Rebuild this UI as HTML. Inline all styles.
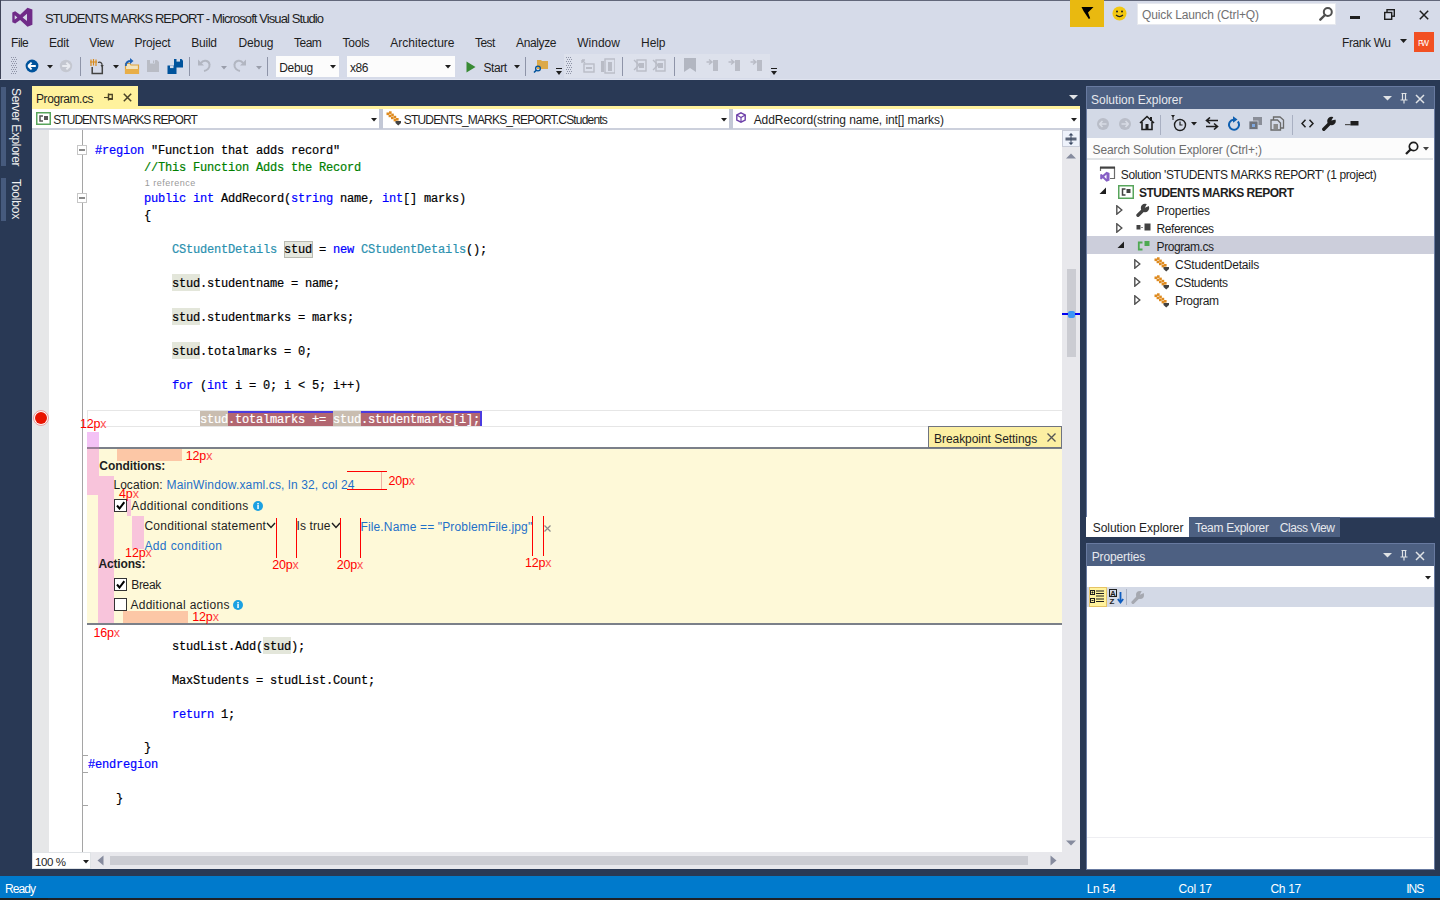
<!DOCTYPE html>
<html><head><meta charset="utf-8">
<style>
*{margin:0;padding:0;box-sizing:border-box}
html,body{width:1440px;height:900px;overflow:hidden;background:#293955;font-family:"Liberation Sans",sans-serif;font-size:12px;color:#1E1E1E}
.a{position:absolute;display:block}
.t{position:absolute;white-space:pre;line-height:1}
.c{position:absolute;white-space:pre;line-height:1;font-family:"Liberation Mono",monospace;font-size:12px;letter-spacing:-0.2px;color:#000;-webkit-text-stroke:0.2px currentColor}
.k{color:#0000FF}.ty{color:#2B91AF}.cm{color:#008000}
</style></head><body>
<div class="a" style="left:0px;top:0px;width:1440px;height:80px;background:#D6DBE9;"></div>
<div class="a" style="left:0px;top:0px;width:1440px;height:1px;background:#62677A;"></div>
<div class="a" style="left:0px;top:0px;width:1px;height:900px;background:#3F4458;"></div>
<svg class="a" style="left:12px;top:7px;" width="22" height="21" viewBox="0 0 22 21"><path d="M15.5 0.8 L20.4 2.6 V17.8 L15.5 19.8 L8.1 13 L3.2 16.6 L0.3 15.3 V5.5 L3.2 4.2 L8.1 7.8 Z M15 6.8 V14 L10.6 10.4 Z M2.7 8.3 V12.5 L5.4 10.4 Z" fill="#702B88" fill-rule="evenodd"/></svg>
<div class="t" style="left:45px;top:11.95px;font-size:13px;color:#1E1E1E;font-family:'Liberation Sans',sans-serif;letter-spacing:-0.908px;">STUDENTS MARKS REPORT - Microsoft Visual Studio</div>
<div class="a" style="left:1070px;top:0px;width:34px;height:27px;background:#E9B910;"></div>
<svg class="a" style="left:1080px;top:6px;" width="16" height="15" viewBox="0 0 16 15"><path d="M1.5 1 H13.5 L8 6.5 L10.2 12.3 L8.8 13 L3.5 5 Z" fill="#000"/></svg>
<svg class="a" style="left:1112px;top:6px;" width="15" height="15" viewBox="0 0 15 15"><circle cx="7.5" cy="7.5" r="7" fill="#F2C811"/><circle cx="5" cy="5.6" r="1" fill="#1E1E1E"/><circle cx="10" cy="5.6" r="1" fill="#1E1E1E"/><path d="M4 9 Q7.5 12.2 11 9" stroke="#1E1E1E" stroke-width="1.1" fill="none"/></svg>
<div class="a" style="left:1137px;top:3px;width:199px;height:22px;background:#FFFFFF;border:1px solid #E6E8EE"></div>
<div class="t" style="left:1142px;top:9.3px;font-size:12px;color:#717171;font-family:'Liberation Sans',sans-serif;letter-spacing:-0.135px;">Quick Launch (Ctrl+Q)</div>
<svg class="a" style="left:1318px;top:6px;" width="16" height="16" viewBox="0 0 16 16"><circle cx="9.8" cy="6" r="4" stroke="#505050" stroke-width="2" fill="none"/><path d="M7 9 L2.3 13.7" stroke="#505050" stroke-width="2.4" stroke-linecap="round"/></svg>
<div class="a" style="left:1350px;top:16px;width:10px;height:3px;background:#1E1E1E;"></div>
<svg class="a" style="left:1384px;top:9px;" width="11" height="11" viewBox="0 0 11 11"><rect x="3" y="0.7" width="7.3" height="6.5" stroke="#1E1E1E" stroke-width="1.4" fill="none"/><rect x="0.7" y="3.5" width="7" height="6.8" stroke="#1E1E1E" stroke-width="1.4" fill="#D6DBE9"/></svg>
<svg class="a" style="left:1419px;top:10px;" width="10" height="10" viewBox="0 0 10 10"><path d="M0.8 0.8 L9.2 9.2 M9.2 0.8 L0.8 9.2" stroke="#1E1E1E" stroke-width="1.5"/></svg>
<div class="t" style="left:1342px;top:37.3px;font-size:12px;color:#1E1E1E;font-family:'Liberation Sans',sans-serif;letter-spacing:-0.397px;">Frank Wu</div>
<svg class="a" style="left:1400px;top:39px;" width="7" height="5" viewBox="0 0 7 5"><path d="M0 0 H7 L3.5 4 Z" fill="#1E1E1E"/></svg>
<div class="a" style="left:1414px;top:32px;width:20px;height:20px;background:#F25022;"></div>
<div class="t" style="left:1418px;top:39.27px;font-size:8.5px;color:#FFFFFF;font-family:'Liberation Sans',sans-serif;letter-spacing:-2.203px;">FW</div>
<div class="t" style="left:11.1px;top:36.6px;font-size:12px;color:#1E1E1E;font-family:'Liberation Sans',sans-serif;letter-spacing:-0.548px;">File</div>
<div class="t" style="left:49.1px;top:36.6px;font-size:12px;color:#1E1E1E;font-family:'Liberation Sans',sans-serif;letter-spacing:-0.257px;">Edit</div>
<div class="t" style="left:89.3px;top:36.6px;font-size:12px;color:#1E1E1E;font-family:'Liberation Sans',sans-serif;letter-spacing:-0.366px;">View</div>
<div class="t" style="left:134.6px;top:36.6px;font-size:12px;color:#1E1E1E;font-family:'Liberation Sans',sans-serif;letter-spacing:-0.241px;">Project</div>
<div class="t" style="left:191.3px;top:36.6px;font-size:12px;color:#1E1E1E;font-family:'Liberation Sans',sans-serif;letter-spacing:-0.247px;">Build</div>
<div class="t" style="left:238.5px;top:36.6px;font-size:12px;color:#1E1E1E;font-family:'Liberation Sans',sans-serif;letter-spacing:-0.115px;">Debug</div>
<div class="t" style="left:294px;top:36.6px;font-size:12px;color:#1E1E1E;font-family:'Liberation Sans',sans-serif;letter-spacing:-0.515px;">Team</div>
<div class="t" style="left:342.6px;top:36.6px;font-size:12px;color:#1E1E1E;font-family:'Liberation Sans',sans-serif;letter-spacing:-0.254px;">Tools</div>
<div class="t" style="left:390.3px;top:36.6px;font-size:12px;color:#1E1E1E;font-family:'Liberation Sans',sans-serif;letter-spacing:0.017px;">Architecture</div>
<div class="t" style="left:475.1px;top:36.6px;font-size:12px;color:#1E1E1E;font-family:'Liberation Sans',sans-serif;letter-spacing:-0.6px;">Test</div>
<div class="t" style="left:516px;top:36.6px;font-size:12px;color:#1E1E1E;font-family:'Liberation Sans',sans-serif;letter-spacing:-0.365px;">Analyze</div>
<div class="t" style="left:577.2px;top:36.6px;font-size:12px;color:#1E1E1E;font-family:'Liberation Sans',sans-serif;letter-spacing:0.022px;">Window</div>
<div class="t" style="left:641.1px;top:36.6px;font-size:12px;color:#1E1E1E;font-family:'Liberation Sans',sans-serif;letter-spacing:-0.129px;">Help</div>
<svg class="a" style="left:11px;top:57px;" width="7" height="18" viewBox="0 0 7 18"><rect x="0" y="0" width="1" height="1" fill="#8E93A6"/><rect x="2" y="0" width="1" height="1" fill="#8E93A6"/><rect x="4" y="0" width="1" height="1" fill="#8E93A6"/><rect x="1" y="2" width="1" height="1" fill="#8E93A6"/><rect x="3" y="2" width="1" height="1" fill="#8E93A6"/><rect x="5" y="2" width="1" height="1" fill="#8E93A6"/><rect x="0" y="4" width="1" height="1" fill="#8E93A6"/><rect x="2" y="4" width="1" height="1" fill="#8E93A6"/><rect x="4" y="4" width="1" height="1" fill="#8E93A6"/><rect x="1" y="6" width="1" height="1" fill="#8E93A6"/><rect x="3" y="6" width="1" height="1" fill="#8E93A6"/><rect x="5" y="6" width="1" height="1" fill="#8E93A6"/><rect x="0" y="8" width="1" height="1" fill="#8E93A6"/><rect x="2" y="8" width="1" height="1" fill="#8E93A6"/><rect x="4" y="8" width="1" height="1" fill="#8E93A6"/><rect x="1" y="10" width="1" height="1" fill="#8E93A6"/><rect x="3" y="10" width="1" height="1" fill="#8E93A6"/><rect x="5" y="10" width="1" height="1" fill="#8E93A6"/><rect x="0" y="12" width="1" height="1" fill="#8E93A6"/><rect x="2" y="12" width="1" height="1" fill="#8E93A6"/><rect x="4" y="12" width="1" height="1" fill="#8E93A6"/><rect x="1" y="14" width="1" height="1" fill="#8E93A6"/><rect x="3" y="14" width="1" height="1" fill="#8E93A6"/><rect x="5" y="14" width="1" height="1" fill="#8E93A6"/><rect x="0" y="16" width="1" height="1" fill="#8E93A6"/><rect x="2" y="16" width="1" height="1" fill="#8E93A6"/><rect x="4" y="16" width="1" height="1" fill="#8E93A6"/></svg>
<svg class="a" style="left:25px;top:59px;" width="14" height="14" viewBox="0 0 14 14"><circle cx="7" cy="7" r="6.4" fill="#00539C"/><path d="M3.2 7 L6.6 3.6 M3.2 7 L6.6 10.4 M3.4 7 H10.8" stroke="#FFFFFF" stroke-width="1.9" fill="none"/></svg>
<svg class="a" style="left:47px;top:65px;" width="6" height="4" viewBox="0 0 6 4"><path d="M0 0 H6 L3 3.5 Z" fill="#1E1E1E"/></svg>
<svg class="a" style="left:59px;top:59px;" width="14" height="14" viewBox="0 0 14 14"><circle cx="7" cy="7" r="6.2" fill="#C4C7D0"/><path d="M10.8 7 L7.4 3.6 M10.8 7 L7.4 10.4 M10.6 7 H3.2" stroke="#E9EBF0" stroke-width="1.9" fill="none"/></svg>
<div class="a" style="left:80px;top:57px;width:1px;height:19px;background:#8E94A8;"></div>
<svg class="a" style="left:89px;top:58px;" width="16" height="17" viewBox="0 0 16 17"><path d="M2 1.5 V8 M4.5 1 V7.5 M7 1.5 V8 M1 4 H8" stroke="#D98A1A" stroke-width="1.2"/><path d="M3.2 9 V15.5 H13.3 V7.5" fill="none" stroke="#424242" stroke-width="1.5"/><path d="M9 4.5 C11.5 3.5 13.5 5 13 7.5" stroke="#424242" stroke-width="1.3" fill="none"/><path d="M11.5 7 L13 9.5 L14.8 7 Z" fill="#424242"/></svg>
<svg class="a" style="left:113px;top:65px;" width="6" height="4" viewBox="0 0 6 4"><path d="M0 0 H6 L3 3.5 Z" fill="#1E1E1E"/></svg>
<svg class="a" style="left:123px;top:58px;" width="17" height="17" viewBox="0 0 17 17"><path d="M2.5 5.5 H7 L8 7 H15.5 V15.5 H2.5 Z" fill="#F1E3BF" stroke="#E0A43C" stroke-width="1.2"/><rect x="2" y="11" width="14" height="5" fill="#E8AE48"/><path d="M2.8 8 C2.8 4.5 5 3 8 3" stroke="#1E62B5" stroke-width="1.8" fill="none"/><path d="M7 0 L10.5 3 L7 6 Z" fill="#1E62B5"/></svg>
<svg class="a" style="left:146px;top:59px;" width="14" height="14" viewBox="0 0 14 14"><path d="M1 1 H11 L13 3 V13 H1 Z" fill="#B9BCC5"/><rect x="4" y="1" width="5" height="3.5" fill="#D6DBE9"/><rect x="7" y="1.5" width="1.2" height="2.5" fill="#B9BCC5"/></svg>
<svg class="a" style="left:166px;top:57px;" width="18" height="18" viewBox="0 0 18 18"><path d="M8 2 H15.5 L17 3.5 V10.5 H8 Z" fill="#00539C"/><rect x="10.5" y="2" width="3.5" height="2.6" fill="#D6DBE9"/><path d="M1.5 8.5 H9 L10.5 10 V17 H1.5 Z" fill="#00539C"/><rect x="4" y="8.5" width="3.5" height="2.6" fill="#D6DBE9"/></svg>
<div class="a" style="left:189px;top:57px;width:1px;height:19px;background:#8E94A8;"></div>
<svg class="a" style="left:197px;top:58px;" width="15" height="15" viewBox="0 0 15 15"><path d="M4 5 C6 1.5 12 2 12.5 6.5 C13 10 10 12.5 7 13" stroke="#B2B6C1" stroke-width="2" fill="none"/><path d="M1 1.5 V7.5 H7 Z" fill="#B2B6C1"/></svg>
<svg class="a" style="left:221px;top:66px;" width="6" height="4" viewBox="0 0 6 4"><path d="M0 0 H6 L3 3.5 Z" fill="#9A9EAB"/></svg>
<svg class="a" style="left:232px;top:58px;" width="15" height="15" viewBox="0 0 15 15"><path d="M11 5 C9 1.5 3 2 2.5 6.5 C2 10 5 12.5 8 13" stroke="#B2B6C1" stroke-width="2" fill="none"/><path d="M14 1.5 V7.5 H8 Z" fill="#B2B6C1"/></svg>
<svg class="a" style="left:256px;top:66px;" width="6" height="4" viewBox="0 0 6 4"><path d="M0 0 H6 L3 3.5 Z" fill="#9A9EAB"/></svg>
<div class="a" style="left:267px;top:57px;width:1px;height:19px;background:#8E94A8;"></div>
<div class="a" style="left:276px;top:56px;width:63px;height:21px;background:#FCFCFC;"></div>
<div class="t" style="left:279.3px;top:62.3px;font-size:12px;color:#1E1E1E;font-family:'Liberation Sans',sans-serif;letter-spacing:-0.34px;">Debug</div>
<svg class="a" style="left:330px;top:65px;" width="6" height="4" viewBox="0 0 6 4"><path d="M0 0 H6 L3 3.5 Z" fill="#1E1E1E"/></svg>
<div class="a" style="left:347px;top:56px;width:108px;height:21px;background:#FCFCFC;"></div>
<div class="t" style="left:350px;top:62.3px;font-size:12px;color:#1E1E1E;font-family:'Liberation Sans',sans-serif;letter-spacing:-0.422px;">x86</div>
<svg class="a" style="left:445px;top:65px;" width="6" height="4" viewBox="0 0 6 4"><path d="M0 0 H6 L3 3.5 Z" fill="#1E1E1E"/></svg>
<svg class="a" style="left:466px;top:61px;" width="10" height="12" viewBox="0 0 10 12"><path d="M0.5 0.5 L9.5 6 L0.5 11.5 Z" fill="#388A34"/></svg>
<div class="t" style="left:483.6px;top:62.3px;font-size:12px;color:#1E1E1E;font-family:'Liberation Sans',sans-serif;letter-spacing:-0.482px;">Start</div>
<svg class="a" style="left:514px;top:65px;" width="6" height="4" viewBox="0 0 6 4"><path d="M0 0 H6 L3 3.5 Z" fill="#1E1E1E"/></svg>
<div class="a" style="left:525px;top:57px;width:1px;height:19px;background:#8E94A8;"></div>
<svg class="a" style="left:533px;top:57px;" width="17" height="17" viewBox="0 0 17 17"><path d="M4 3 H8 L9 4 H15 V12 H4 Z" fill="#DCA948"/><circle cx="5" cy="11.5" r="2.4" stroke="#00539C" stroke-width="1.3" fill="none"/><path d="M3.3 13.2 L1 15.5" stroke="#00539C" stroke-width="1.6"/></svg>
<svg class="a" style="left:555px;top:68px;" width="8" height="8" viewBox="0 0 8 8"><rect x="1" y="0" width="6" height="1" fill="#1E1E1E"/><path d="M1 3 H7 L4 7 Z" fill="#1E1E1E"/></svg>
<div class="a" style="left:564px;top:54px;width:206px;height:24px;background:#DDE1EC;"></div>
<svg class="a" style="left:566px;top:57px;" width="7" height="18" viewBox="0 0 7 18"><rect x="0" y="0" width="1" height="1" fill="#8E93A6"/><rect x="2" y="0" width="1" height="1" fill="#8E93A6"/><rect x="4" y="0" width="1" height="1" fill="#8E93A6"/><rect x="1" y="2" width="1" height="1" fill="#8E93A6"/><rect x="3" y="2" width="1" height="1" fill="#8E93A6"/><rect x="5" y="2" width="1" height="1" fill="#8E93A6"/><rect x="0" y="4" width="1" height="1" fill="#8E93A6"/><rect x="2" y="4" width="1" height="1" fill="#8E93A6"/><rect x="4" y="4" width="1" height="1" fill="#8E93A6"/><rect x="1" y="6" width="1" height="1" fill="#8E93A6"/><rect x="3" y="6" width="1" height="1" fill="#8E93A6"/><rect x="5" y="6" width="1" height="1" fill="#8E93A6"/><rect x="0" y="8" width="1" height="1" fill="#8E93A6"/><rect x="2" y="8" width="1" height="1" fill="#8E93A6"/><rect x="4" y="8" width="1" height="1" fill="#8E93A6"/><rect x="1" y="10" width="1" height="1" fill="#8E93A6"/><rect x="3" y="10" width="1" height="1" fill="#8E93A6"/><rect x="5" y="10" width="1" height="1" fill="#8E93A6"/><rect x="0" y="12" width="1" height="1" fill="#8E93A6"/><rect x="2" y="12" width="1" height="1" fill="#8E93A6"/><rect x="4" y="12" width="1" height="1" fill="#8E93A6"/><rect x="1" y="14" width="1" height="1" fill="#8E93A6"/><rect x="3" y="14" width="1" height="1" fill="#8E93A6"/><rect x="5" y="14" width="1" height="1" fill="#8E93A6"/><rect x="0" y="16" width="1" height="1" fill="#8E93A6"/><rect x="2" y="16" width="1" height="1" fill="#8E93A6"/><rect x="4" y="16" width="1" height="1" fill="#8E93A6"/></svg>
<svg class="a" style="left:580px;top:58px;" width="15" height="16" viewBox="0 0 15 16"><path d="M2 2 L5 5 M2 2 V5 M2 2 H5" stroke="#B9BCC6" stroke-width="1.4"/><rect x="4" y="6" width="10" height="8" fill="none" stroke="#B9BCC6" stroke-width="1.4"/><rect x="6" y="9" width="6" height="2" fill="#B9BCC6"/></svg>
<svg class="a" style="left:600px;top:58px;" width="15" height="16" viewBox="0 0 15 16"><rect x="1" y="3" width="3" height="11" fill="#B9BCC6"/><rect x="5" y="1" width="10" height="14" fill="none" stroke="#B9BCC6" stroke-width="1.4"/><rect x="8" y="4" width="4" height="9" fill="#B9BCC6"/></svg>
<div class="a" style="left:622px;top:57px;width:1px;height:19px;background:#8E94A8;"></div>
<svg class="a" style="left:633px;top:58px;" width="14" height="15" viewBox="0 0 14 15"><rect x="4" y="2" width="9" height="11" fill="none" stroke="#B9BCC6" stroke-width="1.4"/><path d="M1 2 L6 7 L1 12" stroke="#B9BCC6" stroke-width="1.4" fill="none"/><rect x="6" y="5" width="5" height="5" fill="#B9BCC6"/></svg>
<svg class="a" style="left:652px;top:58px;" width="14" height="15" viewBox="0 0 14 15"><rect x="4" y="2" width="9" height="11" fill="none" stroke="#B9BCC6" stroke-width="1.4"/><path d="M1 2 L6 7 L1 12" stroke="#B9BCC6" stroke-width="1.4" fill="none"/><rect x="6" y="5" width="5" height="5" fill="#B9BCC6"/></svg>
<div class="a" style="left:674px;top:57px;width:1px;height:19px;background:#8E94A8;"></div>
<svg class="a" style="left:684px;top:58px;" width="12" height="15" viewBox="0 0 12 15"><path d="M0 0 H12 V14 L6 10 L0 14 Z" fill="#B2B6C1"/></svg>
<svg class="a" style="left:706px;top:58px;" width="14" height="15" viewBox="0 0 14 15"><rect x="7" y="2" width="5" height="11" fill="#B9BCC6"/><path d="M0.5 4 H6 M3 1.5 L6 4 L3 6.5" stroke="#B9BCC6" stroke-width="1.4" fill="none"/></svg>
<svg class="a" style="left:728px;top:58px;" width="14" height="15" viewBox="0 0 14 15"><rect x="7" y="2" width="5" height="11" fill="#B9BCC6"/><path d="M0.5 4 H6 M3 1.5 L6 4 L3 6.5" stroke="#B9BCC6" stroke-width="1.4" fill="none"/></svg>
<svg class="a" style="left:750px;top:58px;" width="14" height="15" viewBox="0 0 14 15"><rect x="7" y="2" width="5" height="11" fill="#B9BCC6"/><path d="M0.5 4 H6 M3 1.5 L6 4 L3 6.5" stroke="#B9BCC6" stroke-width="1.4" fill="none"/></svg>
<svg class="a" style="left:770px;top:68px;" width="8" height="8" viewBox="0 0 8 8"><rect x="1" y="0" width="6" height="1" fill="#1E1E1E"/><path d="M1 3 H7 L4 7 Z" fill="#1E1E1E"/></svg>
<div class="a" style="left:0px;top:80px;width:1440px;height:796px;background:#293955;"></div>
<div class="a" style="left:0px;top:79px;width:1440px;height:1px;background:#DFE3EF;"></div>
<div class="a" style="left:1px;top:87px;width:5px;height:79px;background:#465A7D;"></div>
<div class="a" style="left:1px;top:178px;width:5px;height:43px;background:#465A7D;"></div>
<div class="t" style="left:9px;top:88px;width:13px;height:78px;writing-mode:vertical-rl;font-size:12px;color:#F0F0F0;letter-spacing:-0.35px;line-height:13px">Server Explorer</div>
<div class="t" style="left:9px;top:179px;width:13px;height:41px;writing-mode:vertical-rl;font-size:12px;color:#F0F0F0;letter-spacing:-0.2px;line-height:13px">Toolbox</div>
<div class="a" style="left:32px;top:86px;width:106px;height:21px;background:#FFF29D;"></div>
<div class="t" style="left:36px;top:93.3px;font-size:12px;color:#1E1E1E;font-family:'Liberation Sans',sans-serif;letter-spacing:-0.427px;">Program.cs</div>
<svg class="a" style="left:104px;top:92px;" width="11" height="10" viewBox="0 0 11 10"><path d="M0 5.5 H4.5" stroke="#4A4326" stroke-width="1.1"/><path d="M4.5 2.5 H8.3 V7 H4.5 Z" stroke="#4A4326" stroke-width="1.3" fill="none"/><rect x="4" y="6" width="4.8" height="1.8" fill="#4A4326"/><path d="M4.5 1.5 V8.5" stroke="#4A4326" stroke-width="1.2"/></svg>
<svg class="a" style="left:123px;top:93px;" width="9" height="9" viewBox="0 0 9 9"><path d="M0.8 0.8 L8.2 8.2 M8.2 0.8 L0.8 8.2" stroke="#4A4326" stroke-width="1.5"/></svg>
<svg class="a" style="left:1069px;top:95px;" width="9" height="5" viewBox="0 0 9 5"><path d="M0 0 H9 L4.5 4.5 Z" fill="#E0E3E6"/></svg>
<div class="a" style="left:32px;top:106px;width:1048px;height:3px;background:#FFF29D;"></div>
<div class="a" style="left:32px;top:109px;width:1048px;height:21px;background:#FFFFFF;"></div>
<div class="a" style="left:32px;top:128px;width:1048px;height:2px;background:#CCD0DC;"></div>
<svg class="a" style="left:36px;top:112px;" width="15" height="13" viewBox="0 0 15 13"><rect x="0.75" y="0.75" width="13.5" height="11.5" fill="none" stroke="#58A55C" stroke-width="1.5"/><path d="M7 4 H4 V9 H7" stroke="#555" stroke-width="1.5" fill="none"/><rect x="8" y="4" width="4" height="4" fill="#555"/></svg>
<div class="t" style="left:53.3px;top:114.1px;font-size:12px;color:#1E1E1E;font-family:'Liberation Sans',sans-serif;letter-spacing:-0.969px;">STUDENTS MARKS REPORT</div>
<svg class="a" style="left:371px;top:118px;" width="6" height="4" viewBox="0 0 6 4"><path d="M0 0 H6 L3 3.5 Z" fill="#1E1E1E"/></svg>
<div class="a" style="left:379px;top:109px;width:4px;height:20px;background:#C3C8D6;"></div>
<svg class="a" style="left:386px;top:111px;" width="16" height="15" viewBox="0 0 16 15"><rect x="0.5" y="1.5" width="2.6" height="2.6" fill="#DE8A1F"/><rect x="3" y="0.3" width="2.6" height="2.6" fill="#DE8A1F"/><rect x="2.6" y="3.6" width="2.6" height="2.6" fill="#DE8A1F"/><rect x="5.2" y="2.6" width="2.6" height="2.6" fill="#DE8A1F"/><rect x="5" y="5.6" width="2.6" height="2.6" fill="#DE8A1F"/><rect x="7.6" y="4.8" width="2.6" height="2.6" fill="#DE8A1F"/><rect x="7.6" y="7.8" width="2.6" height="2.6" fill="#DE8A1F"/><rect x="10" y="7" width="2.6" height="2.6" fill="#DE8A1F"/><path d="M9.5 10 H15 V12 L12.25 14.5 L9.5 12 Z" fill="#424242"/></svg>
<div class="t" style="left:403.75px;top:114.1px;font-size:12px;color:#1E1E1E;font-family:'Liberation Sans',sans-serif;letter-spacing:-0.816px;">STUDENTS_MARKS_REPORT.CStudents</div>
<svg class="a" style="left:721px;top:118px;" width="6" height="4" viewBox="0 0 6 4"><path d="M0 0 H6 L3 3.5 Z" fill="#1E1E1E"/></svg>
<div class="a" style="left:729px;top:109px;width:4px;height:20px;background:#C3C8D6;"></div>
<svg class="a" style="left:736px;top:112px;" width="10" height="11" viewBox="0 0 10 11"><path d="M5 0.8 L9.2 3 V8 L5 10.2 L0.8 8 V3 Z" fill="none" stroke="#6C3EA8" stroke-width="1.4"/><path d="M0.8 3 L5 5.5 L9.2 3 M5 5.5 V10" stroke="#6C3EA8" stroke-width="1.2" fill="none"/></svg>
<div class="t" style="left:753.7px;top:114.1px;font-size:12px;color:#1E1E1E;font-family:'Liberation Sans',sans-serif;letter-spacing:-0.074px;">AddRecord(string name, int[] marks)</div>
<svg class="a" style="left:1071px;top:118px;" width="6" height="4" viewBox="0 0 6 4"><path d="M0 0 H6 L3 3.5 Z" fill="#1E1E1E"/></svg>
<div class="a" style="left:32px;top:130px;width:1030px;height:722px;background:#FFFFFF;"></div>
<div class="a" style="left:32px;top:130px;width:17px;height:722px;background:#E6E7E8;"></div>
<div class="a" style="left:82px;top:130px;width:1px;height:722px;background:#A5A5A5;"></div>
<div class="a" style="left:1062px;top:130px;width:18px;height:722px;background:#E8E8EC;"></div>
<div class="a" style="left:1062px;top:130px;width:18px;height:17px;background:#EEF2FB;border:1px solid #C8CCD8"></div>
<svg class="a" style="left:1064px;top:132px;" width="14" height="14" viewBox="0 0 14 14"><path d="M7 1 L9.5 3.5 H4.5 Z M7 13 L9.5 10.5 H4.5 Z" fill="#3C4A64"/><rect x="1.5" y="5.5" width="11" height="3" fill="#5A6478"/><path d="M7 3 V11" stroke="#3C4A64"/></svg>
<svg class="a" style="left:1066px;top:153px;" width="10" height="6" viewBox="0 0 10 6"><path d="M0 5.5 L5 0.5 L10 5.5 Z" fill="#868B9E"/></svg>
<div class="a" style="left:1067px;top:269px;width:9px;height:88px;background:#CBCCD2;"></div>
<div class="a" style="left:1062px;top:313px;width:18px;height:2px;background:#0000F0;"></div>
<svg class="a" style="left:1068px;top:311px;" width="7" height="7" viewBox="0 0 7 7"><rect x="0" y="0" width="7" height="7" rx="2" fill="#3C96F5"/></svg>
<svg class="a" style="left:1066px;top:840px;" width="10" height="6" viewBox="0 0 10 6"><path d="M0 0.5 L5 5.5 L10 0.5 Z" fill="#868B9E"/></svg>
<div class="a" style="left:32px;top:852px;width:1048px;height:17px;background:#E8E8EC;"></div>
<div class="a" style="left:32px;top:852px;width:59px;height:17px;background:#FFFFFF;border:1px solid #E0E3E6"></div>
<div class="t" style="left:35px;top:856.73px;font-size:11.5px;color:#1E1E1E;font-family:'Liberation Sans',sans-serif;letter-spacing:-0.395px;">100 %</div>
<svg class="a" style="left:83px;top:860px;" width="6" height="4" viewBox="0 0 6 4"><path d="M0 0 H6 L3 3.5 Z" fill="#1E1E1E"/></svg>
<svg class="a" style="left:97px;top:855px;" width="7" height="11" viewBox="0 0 7 11"><path d="M6.5 0.5 L0.5 5.5 L6.5 10.5 Z" fill="#868B9E"/></svg>
<div class="a" style="left:110px;top:856px;width:918px;height:9px;background:#CBCCD2;"></div>
<svg class="a" style="left:1050px;top:855px;" width="7" height="11" viewBox="0 0 7 11"><path d="M0.5 0.5 L6.5 5.5 L0.5 10.5 Z" fill="#868B9E"/></svg>
<div class="a" style="left:1086px;top:86px;width:349px;height:432px;background:#FFFFFF;border:1px solid #687AA0"></div>
<div class="a" style="left:1087px;top:87px;width:347px;height:22px;background:#4D6082;"></div>
<div class="t" style="left:1091px;top:94.3px;font-size:12px;color:#E7E9EE;font-family:'Liberation Sans',sans-serif;letter-spacing:0.008px;">Solution Explorer</div>
<svg class="a" style="left:1383px;top:96px;" width="9" height="5" viewBox="0 0 9 5"><path d="M0 0 H9 L4.5 4.5 Z" fill="#E0E3E6"/></svg>
<svg class="a" style="left:1400px;top:93px;" width="8" height="11" viewBox="0 0 8 11"><path d="M1.5 0.5 H6.5 M2.5 0.5 V7 H5.5 V0.5 M0.5 7 H7.5 M4 7 V10.5" stroke="#E0E3E6" stroke-width="1.2" fill="none"/></svg>
<svg class="a" style="left:1415px;top:94px;" width="10" height="10" viewBox="0 0 10 10"><path d="M1 1 L9 9 M9 1 L1 9" stroke="#E0E3E6" stroke-width="1.5"/></svg>
<div class="a" style="left:1087px;top:109px;width:347px;height:29px;background:#D3D9E6;"></div>
<svg class="a" style="left:1096px;top:117px;" width="14" height="14" viewBox="0 0 14 14"><circle cx="7" cy="7" r="6" fill="#B9BDC8"/><path d="M3.5 7 H10.5 M3.5 7 L6.5 4 M3.5 7 L6.5 10" stroke="#D8DCE5" stroke-width="1.6" fill="none"/></svg>
<svg class="a" style="left:1118px;top:117px;" width="14" height="14" viewBox="0 0 14 14"><circle cx="7" cy="7" r="6" fill="#B9BDC8"/><path d="M3.5 7 H10.5 M10.5 7 L7.5 4 M10.5 7 L7.5 10" stroke="#D8DCE5" stroke-width="1.6" fill="none"/></svg>
<svg class="a" style="left:1139px;top:115px;" width="16" height="16" viewBox="0 0 16 16"><path d="M1 8 L8 1.5 L15 8 M3 7 V14.5 H13 V7" stroke="#1E1E1E" stroke-width="1.6" fill="none"/><rect x="6.5" y="9" width="3" height="5.5" fill="#1E1E1E"/><rect x="11" y="2" width="2" height="4" fill="#1E1E1E"/></svg>
<div class="a" style="left:1160px;top:115px;width:1px;height:20px;background:#A9B0C2;"></div>
<svg class="a" style="left:1170px;top:114px;" width="18" height="18" viewBox="0 0 18 18"><path d="M1 1 H5 L3 3.5 Z" fill="#1E1E1E"/><path d="M3 2 V6" stroke="#1E1E1E"/><circle cx="10" cy="11" r="5.5" fill="none" stroke="#1E1E1E" stroke-width="1.4"/><path d="M10 7.5 V11 H12.5" stroke="#1E1E1E" stroke-width="1.2" fill="none"/></svg>
<svg class="a" style="left:1191px;top:122px;" width="6" height="4" viewBox="0 0 6 4"><path d="M0 0 H6 L3 3.5 Z" fill="#1E1E1E"/></svg>
<svg class="a" style="left:1205px;top:117px;" width="14" height="13" viewBox="0 0 14 13"><path d="M13 3.5 H1.5 M5 0.5 L1.5 3.5 L5 6.5 M1 9.5 H12.5 M9 6.5 L12.5 9.5 L9 12.5" stroke="#1E1E1E" stroke-width="1.6" fill="none"/></svg>
<svg class="a" style="left:1226px;top:116px;" width="15" height="15" viewBox="0 0 15 15"><path d="M11.8 5.5 A5 5 0 1 1 7.5 3.8" stroke="#0F5FB0" stroke-width="2" fill="none"/><path d="M7 0.3 L11.5 3.5 L7 6.8 Z" fill="#0F5FB0"/></svg>
<svg class="a" style="left:1249px;top:117px;" width="13" height="13" viewBox="0 0 13 13"><rect x="4" y="0" width="9" height="8" fill="#8A8E98"/><rect x="0" y="4" width="9" height="8.5" fill="#6E727C" stroke="#D0D6E4" stroke-width="0.8"/><rect x="3" y="7" width="3" height="3" fill="#7FA8E0"/></svg>
<svg class="a" style="left:1270px;top:116px;" width="15" height="15" viewBox="0 0 15 15"><path d="M3.5 1 H10 L13.5 4 V12 H3.5 Z" fill="none" stroke="#6A6A6A" stroke-width="1.3"/><path d="M1 4 H7.5 L10.5 7 V14 H1 Z" fill="#D3D9E6" stroke="#6A6A6A" stroke-width="1.3"/><rect x="3.5" y="8" width="4.5" height="5" fill="#8A8A8A"/></svg>
<div class="a" style="left:1292px;top:115px;width:1px;height:20px;background:#A9B0C2;"></div>
<svg class="a" style="left:1301px;top:119px;" width="13" height="9" viewBox="0 0 13 9"><path d="M4.5 0.8 L1 4.5 L4.5 8.2 M8.5 0.8 L12 4.5 L8.5 8.2" stroke="#1E1E1E" stroke-width="1.5" fill="none"/></svg>
<svg class="a" style="left:1322px;top:116px;" width="14" height="15" viewBox="0 0 14 15"><path d="M1.8 13.2 L7 8" stroke="#1E1E1E" stroke-width="3.4" stroke-linecap="round"/><circle cx="9.5" cy="5" r="4.3" fill="#1E1E1E"/><path d="M9.3 4.6 L12 0 L15 3.2 Z" fill="#D3D9E6"/></svg>
<svg class="a" style="left:1344px;top:120px;" width="15" height="6" viewBox="0 0 15 6"><rect x="6.5" y="1" width="8" height="4.5" fill="#1E1E1E"/><rect x="1" y="4" width="6" height="1.2" fill="#505050"/></svg>
<div class="a" style="left:1087px;top:138px;width:347px;height:21px;background:#FCFCFC;"></div>
<div class="a" style="left:1087px;top:158px;width:346px;height:2px;background:#E0E3E6;"></div>
<div class="t" style="left:1092.5px;top:143.55px;font-size:12px;color:#6D6D6D;font-family:'Liberation Sans',sans-serif;letter-spacing:-0.111px;">Search Solution Explorer (Ctrl+;)</div>
<svg class="a" style="left:1405px;top:141px;" width="14" height="14" viewBox="0 0 14 14"><circle cx="8.5" cy="5.5" r="4.2" stroke="#1E1E1E" stroke-width="1.7" fill="none"/><path d="M5.8 8.2 L1 13" stroke="#1E1E1E" stroke-width="2.3"/></svg>
<svg class="a" style="left:1423px;top:147px;" width="6" height="4" viewBox="0 0 6 4"><path d="M0 0 H6 L3 3.5 Z" fill="#424242"/></svg>
<svg class="a" style="left:1099px;top:166px;" width="17" height="16" viewBox="0 0 17 16"><path d="M1.5 5 V1.5 H15.5 V12.5 H11" fill="none" stroke="#6A6A6A" stroke-width="1.2"/><rect x="1" y="0.5" width="15" height="2.2" fill="#424242"/><path d="M7.5 5.8 L10.5 7 V14.5 L7.5 15.7 L3.8 12.3 L2.3 13.4 L1.2 12.9 V8.4 L2.3 7.9 L3.8 9 Z M7.5 8.4 L5.2 10.65 L7.5 12.9 Z" fill="#865FC5" fill-rule="evenodd"/></svg>
<div class="t" style="left:1120.8px;top:169.2px;font-size:12px;color:#1E1E1E;font-family:'Liberation Sans',sans-serif;letter-spacing:-0.382px;">Solution &#x27;STUDENTS MARKS REPORT&#x27; (1 project)</div>
<svg class="a" style="left:1099px;top:187px;" width="8" height="8" viewBox="0 0 8 8"><path d="M7 0.5 V7 H0.5 Z" fill="#1E1E1E"/></svg>
<svg class="a" style="left:1118px;top:185px;" width="16" height="14" viewBox="0 0 16 14"><rect x="0.75" y="0.75" width="14.5" height="12.5" fill="none" stroke="#58A55C" stroke-width="1.5"/><path d="M7.5 4 H4.5 V10 H7.5" stroke="#424242" stroke-width="1.5" fill="none"/><rect x="8.5" y="4" width="4" height="4" fill="#424242"/></svg>
<div class="t" style="left:1139px;top:186.6px;font-size:12px;color:#1E1E1E;font-family:'Liberation Sans',sans-serif;font-weight:bold;letter-spacing:-0.517px;">STUDENTS MARKS REPORT</div>
<svg class="a" style="left:1116px;top:205px;" width="7" height="10" viewBox="0 0 7 10"><path d="M0.8 0.8 L5.8 5 L0.8 9.2 Z" fill="none" stroke="#505050" stroke-width="1.4"/></svg>
<svg class="a" style="left:1136px;top:203px;" width="14" height="14" viewBox="0 0 14 14"><path d="M2 12.3 L6.8 7.5" stroke="#424242" stroke-width="3.4" stroke-linecap="round"/><circle cx="9" cy="5" r="4.2" fill="#424242"/><path d="M8.8 4.8 L11.2 0.2 L14 2.6 Z" fill="#FFFFFF"/></svg>
<div class="t" style="left:1156.6px;top:205.3px;font-size:12px;color:#1E1E1E;font-family:'Liberation Sans',sans-serif;letter-spacing:-0.143px;">Properties</div>
<svg class="a" style="left:1116px;top:223px;" width="7" height="10" viewBox="0 0 7 10"><path d="M0.8 0.8 L5.8 5 L0.8 9.2 Z" fill="none" stroke="#505050" stroke-width="1.4"/></svg>
<svg class="a" style="left:1136px;top:223px;" width="16" height="10" viewBox="0 0 16 10"><rect x="0.5" y="2" width="4" height="4.5" fill="#424242"/><rect x="5" y="4" width="2" height="1" fill="#888"/><rect x="8.5" y="0.5" width="6" height="7" fill="#424242"/></svg>
<div class="t" style="left:1156.6px;top:223.4px;font-size:12px;color:#1E1E1E;font-family:'Liberation Sans',sans-serif;letter-spacing:-0.44px;">References</div>
<div class="a" style="left:1087px;top:236px;width:347px;height:18px;background:#CCCEDB;"></div>
<svg class="a" style="left:1117px;top:241px;" width="8" height="8" viewBox="0 0 8 8"><path d="M7 0.5 V7 H0.5 Z" fill="#1E1E1E"/></svg>
<svg class="a" style="left:1137px;top:240px;" width="14" height="12" viewBox="0 0 14 12"><path d="M5.5 2.5 H1.8 V9.5 H5.5" stroke="#4EA952" stroke-width="1.8" fill="none"/><rect x="7.5" y="1" width="5" height="5" fill="#4EA952"/></svg>
<div class="t" style="left:1156.6px;top:241.3px;font-size:12px;color:#1E1E1E;font-family:'Liberation Sans',sans-serif;letter-spacing:-0.438px;">Program.cs</div>
<svg class="a" style="left:1134px;top:259px;" width="7" height="10" viewBox="0 0 7 10"><path d="M0.8 0.8 L5.8 5 L0.8 9.2 Z" fill="none" stroke="#505050" stroke-width="1.4"/></svg>
<svg class="a" style="left:1154px;top:257px;" width="16" height="15" viewBox="0 0 16 15"><rect x="0.5" y="1.5" width="2.6" height="2.6" fill="#DE8A1F"/><rect x="3" y="0.3" width="2.6" height="2.6" fill="#DE8A1F"/><rect x="2.6" y="3.6" width="2.6" height="2.6" fill="#DE8A1F"/><rect x="5.2" y="2.6" width="2.6" height="2.6" fill="#DE8A1F"/><rect x="5" y="5.6" width="2.6" height="2.6" fill="#DE8A1F"/><rect x="7.6" y="4.8" width="2.6" height="2.6" fill="#DE8A1F"/><rect x="7.6" y="7.8" width="2.6" height="2.6" fill="#DE8A1F"/><rect x="10" y="7" width="2.6" height="2.6" fill="#DE8A1F"/><path d="M9.5 10 H15 V12 L12.25 14.5 L9.5 12 Z" fill="#424242"/></svg>
<div class="t" style="left:1175px;top:258.8px;font-size:12px;color:#1E1E1E;font-family:'Liberation Sans',sans-serif;letter-spacing:-0.172px;">CStudentDetails</div>
<svg class="a" style="left:1134px;top:277px;" width="7" height="10" viewBox="0 0 7 10"><path d="M0.8 0.8 L5.8 5 L0.8 9.2 Z" fill="none" stroke="#505050" stroke-width="1.4"/></svg>
<svg class="a" style="left:1154px;top:275px;" width="16" height="15" viewBox="0 0 16 15"><rect x="0.5" y="1.5" width="2.6" height="2.6" fill="#DE8A1F"/><rect x="3" y="0.3" width="2.6" height="2.6" fill="#DE8A1F"/><rect x="2.6" y="3.6" width="2.6" height="2.6" fill="#DE8A1F"/><rect x="5.2" y="2.6" width="2.6" height="2.6" fill="#DE8A1F"/><rect x="5" y="5.6" width="2.6" height="2.6" fill="#DE8A1F"/><rect x="7.6" y="4.8" width="2.6" height="2.6" fill="#DE8A1F"/><rect x="7.6" y="7.8" width="2.6" height="2.6" fill="#DE8A1F"/><rect x="10" y="7" width="2.6" height="2.6" fill="#DE8A1F"/><path d="M9.5 10 H15 V12 L12.25 14.5 L9.5 12 Z" fill="#424242"/></svg>
<div class="t" style="left:1175px;top:276.8px;font-size:12px;color:#1E1E1E;font-family:'Liberation Sans',sans-serif;letter-spacing:-0.377px;">CStudents</div>
<svg class="a" style="left:1134px;top:295px;" width="7" height="10" viewBox="0 0 7 10"><path d="M0.8 0.8 L5.8 5 L0.8 9.2 Z" fill="none" stroke="#505050" stroke-width="1.4"/></svg>
<svg class="a" style="left:1154px;top:293px;" width="16" height="15" viewBox="0 0 16 15"><rect x="0.5" y="1.5" width="2.6" height="2.6" fill="#DE8A1F"/><rect x="3" y="0.3" width="2.6" height="2.6" fill="#DE8A1F"/><rect x="2.6" y="3.6" width="2.6" height="2.6" fill="#DE8A1F"/><rect x="5.2" y="2.6" width="2.6" height="2.6" fill="#DE8A1F"/><rect x="5" y="5.6" width="2.6" height="2.6" fill="#DE8A1F"/><rect x="7.6" y="4.8" width="2.6" height="2.6" fill="#DE8A1F"/><rect x="7.6" y="7.8" width="2.6" height="2.6" fill="#DE8A1F"/><rect x="10" y="7" width="2.6" height="2.6" fill="#DE8A1F"/><path d="M9.5 10 H15 V12 L12.25 14.5 L9.5 12 Z" fill="#424242"/></svg>
<div class="t" style="left:1175px;top:294.8px;font-size:12px;color:#1E1E1E;font-family:'Liberation Sans',sans-serif;letter-spacing:-0.336px;">Program</div>
<div class="a" style="left:1086px;top:517px;width:103px;height:20px;background:#FFFFFF;"></div>
<div class="a" style="left:1189px;top:517px;width:151px;height:20px;background:#4D6082;"></div>
<div class="t" style="left:1092.7px;top:522.0px;font-size:12px;color:#1E1E1E;font-family:'Liberation Sans',sans-serif;letter-spacing:-0.036px;">Solution Explorer</div>
<div class="t" style="left:1195px;top:522.0px;font-size:12px;color:#E7E9EE;font-family:'Liberation Sans',sans-serif;letter-spacing:-0.28px;">Team Explorer</div>
<div class="t" style="left:1279.8px;top:522.0px;font-size:12px;color:#E7E9EE;font-family:'Liberation Sans',sans-serif;letter-spacing:-0.449px;">Class View</div>
<div class="a" style="left:1086px;top:543px;width:349px;height:327px;background:#FFFFFF;border:1px solid #687AA0"></div>
<div class="a" style="left:1087px;top:544px;width:347px;height:22px;background:#4D6082;"></div>
<div class="t" style="left:1091.7px;top:551.3px;font-size:12px;color:#E7E9EE;font-family:'Liberation Sans',sans-serif;letter-spacing:-0.121px;">Properties</div>
<svg class="a" style="left:1383px;top:553px;" width="9" height="5" viewBox="0 0 9 5"><path d="M0 0 H9 L4.5 4.5 Z" fill="#E0E3E6"/></svg>
<svg class="a" style="left:1400px;top:550px;" width="8" height="11" viewBox="0 0 8 11"><path d="M1.5 0.5 H6.5 M2.5 0.5 V7 H5.5 V0.5 M0.5 7 H7.5 M4 7 V10.5" stroke="#E0E3E6" stroke-width="1.2" fill="none"/></svg>
<svg class="a" style="left:1415px;top:551px;" width="10" height="10" viewBox="0 0 10 10"><path d="M1 1 L9 9 M9 1 L1 9" stroke="#E0E3E6" stroke-width="1.5"/></svg>
<svg class="a" style="left:1425px;top:576px;" width="6" height="4" viewBox="0 0 6 4"><path d="M0 0 H6 L3 3.5 Z" fill="#1E1E1E"/></svg>
<div class="a" style="left:1087px;top:587px;width:347px;height:20px;background:#D3D9E6;"></div>
<div class="a" style="left:1089px;top:587px;width:18px;height:20px;background:#FFF29D;border:1px solid #E5C365"></div>
<svg class="a" style="left:1090px;top:590px;" width="16" height="15" viewBox="0 0 16 15"><rect x="0.5" y="0.5" width="4" height="4" fill="none" stroke="#1E1E1E"/><path d="M1.5 2.5 H3.5 M2.5 1.5 V3.5" stroke="#1E1E1E"/><rect x="0.5" y="8.5" width="4" height="4" fill="none" stroke="#1E1E1E"/><path d="M1.5 10.5 H3.5" stroke="#1E1E1E"/><path d="M6 1 H14 M6 3.5 H14 M6 6 H14 M6 9 H14 M6 11.5 H14" stroke="#1E1E1E" stroke-width="1"/></svg>
<svg class="a" style="left:1109px;top:589px;" width="15" height="16" viewBox="0 0 15 16"><rect x="0.5" y="0.5" width="7" height="7" fill="none" stroke="#1E1E1E"/><text x="1.3" y="6.7" font-size="7.5" font-family="Liberation Sans" font-weight="bold" fill="#1E1E1E">A</text><text x="0.5" y="15" font-size="8" font-family="Liberation Sans" font-weight="bold" fill="#1E1E1E">Z</text><path d="M11.5 3 V13 M8.8 10 L11.5 13.5 L14.2 10" stroke="#0E5CBF" stroke-width="1.8" fill="none"/></svg>
<div class="a" style="left:1126px;top:589px;width:1px;height:16px;background:#A9B0C2;"></div>
<svg class="a" style="left:1131px;top:590px;" width="14" height="14" viewBox="0 0 14 14"><path d="M2 12.3 L6.8 7.5" stroke="#A5A8B0" stroke-width="3.2" stroke-linecap="round"/><circle cx="9" cy="5" r="4" fill="#A5A8B0"/><path d="M8.8 4.8 L11.2 0.2 L14 2.6 Z" fill="#D3D9E6"/></svg>
<div class="a" style="left:1087px;top:837px;width:346px;height:1px;background:#EEEEF2;"></div>
<div class="a" style="left:0px;top:876px;width:1440px;height:22px;background:#007ACC;"></div>
<div class="a" style="left:0px;top:898px;width:1440px;height:2px;background:#1E2128;"></div>
<div class="a" style="left:0px;top:898px;width:48px;height:2px;background:#1E1E1E;"></div>
<div class="t" style="left:5px;top:882.6px;font-size:12px;color:#FFFFFF;font-family:'Liberation Sans',sans-serif;letter-spacing:-0.922px;">Ready</div>
<div class="t" style="left:1086.7px;top:882.8px;font-size:12px;color:#FFFFFF;font-family:'Liberation Sans',sans-serif;letter-spacing:-0.279px;">Ln 54</div>
<div class="t" style="left:1178.6px;top:882.8px;font-size:12px;color:#FFFFFF;font-family:'Liberation Sans',sans-serif;letter-spacing:-0.258px;">Col 17</div>
<div class="t" style="left:1270.4px;top:882.8px;font-size:12px;color:#FFFFFF;font-family:'Liberation Sans',sans-serif;letter-spacing:-0.304px;">Ch 17</div>
<div class="t" style="left:1406.2px;top:882.8px;font-size:12px;color:#FFFFFF;font-family:'Liberation Sans',sans-serif;letter-spacing:-1.0px;">INS</div>
<div class="a" style="left:77px;top:145px;width:10px;height:10px;background:#FFFFFF;border:1px solid #C6C6C6"></div>
<div class="a" style="left:79px;top:149px;width:6px;height:2px;background:#8A8A8A;"></div>
<div class="a" style="left:77px;top:193px;width:10px;height:10px;background:#FFFFFF;border:1px solid #C6C6C6"></div>
<div class="a" style="left:79px;top:197px;width:6px;height:2px;background:#8A8A8A;"></div>
<div class="c" style="left:95px;top:145.38px"><span class="k">#region</span> &quot;Function that adds record&quot;</div>
<div class="c" style="left:144px;top:162.38px"><span class="cm">//This Function Adds the Record</span></div>
<div class="t" style="left:144.75px;top:179.35px;font-size:9px;color:#9A9A9A;font-family:'Liberation Sans',sans-serif;letter-spacing:0.5px;">1 reference</div>
<div class="c" style="left:144px;top:192.88px"><span class="k">public</span> <span class="k">int</span> AddRecord(<span class="k">string</span> name, <span class="k">int</span>[] marks)</div>
<div class="c" style="left:144px;top:209.88px">{</div>
<div class="a" style="left:284px;top:241px;width:29px;height:17px;background:#E5E7DE;border:1px solid #B8B9B0"></div>
<div class="a" style="left:172px;top:274px;width:28px;height:17px;background:#E3E6DA;"></div>
<div class="a" style="left:172px;top:308px;width:28px;height:17px;background:#E3E6DA;"></div>
<div class="a" style="left:172px;top:342px;width:28px;height:17px;background:#E3E6DA;"></div>
<div class="a" style="left:263px;top:637px;width:28px;height:17px;background:#E3E6DA;"></div>
<div class="c" style="left:172px;top:243.88px"><span class="ty">CStudentDetails</span> stud = <span class="k">new</span> <span class="ty">CStudentDetails</span>();</div>
<div class="c" style="left:172px;top:277.88px">stud.studentname = name;</div>
<div class="c" style="left:172px;top:311.88px">stud.studentmarks = marks;</div>
<div class="c" style="left:172px;top:345.88px">stud.totalmarks = 0;</div>
<div class="c" style="left:172px;top:379.88px"><span class="k">for</span> (<span class="k">int</span> i = 0; i &lt; 5; i++)</div>
<div class="a" style="left:87px;top:410px;width:975px;height:17px;background:#FFFFFF;border:1px solid #E6E6E6;border-right:none"></div>
<div class="a" style="left:200px;top:411px;width:28px;height:15px;background:#C9BDB0;"></div>
<div class="a" style="left:228px;top:411px;width:105px;height:15px;background:#B26670;border-top:2px solid #4B3BE0"></div>
<div class="a" style="left:333px;top:411px;width:28px;height:15px;background:#C9BDB0;"></div>
<div class="a" style="left:361px;top:411px;width:121px;height:15px;background:#B26670;border-top:2px solid #4B3BE0;border-right:2px solid #4B3BE0"></div>
<div class="c" style="left:200px;top:413.88px"><span style="color:#FFFFFF">stud.totalmarks += stud.studentmarks[i];</span></div>
<svg class="a" style="left:32px;top:409px;" width="18" height="18" viewBox="0 0 18 18"><circle cx="9" cy="9" r="7.4" fill="#FFFFFF" stroke="#E88080" stroke-width="0.8"/><circle cx="9" cy="9" r="6" fill="#E81400"/></svg>
<div class="c" style="left:172px;top:640.88px">studList.Add(stud);</div>
<div class="c" style="left:172px;top:674.88px">MaxStudents = studList.Count;</div>
<div class="c" style="left:172px;top:708.88px"><span class="k">return</span> 1;</div>
<div class="c" style="left:144px;top:741.88px">}</div>
<div class="c" style="left:88px;top:758.88px"><span class="k">#endregion</span></div>
<div class="c" style="left:116px;top:792.88px">}</div>
<div class="a" style="left:83px;top:755px;width:5px;height:1px;background:#A5A5A5;"></div>
<div class="a" style="left:83px;top:772px;width:5px;height:1px;background:#A5A5A5;"></div>
<div class="a" style="left:83px;top:805px;width:5px;height:1px;background:#A5A5A5;"></div>
<div class="a" style="left:87px;top:447px;width:975px;height:178px;background:#FEF9D8;"></div>
<div class="a" style="left:87px;top:447px;width:975px;height:2px;background:#7B8089;"></div>
<div class="a" style="left:87px;top:623px;width:975px;height:2px;background:#7B8089;"></div>
<div class="a" style="left:928px;top:426px;width:134px;height:22px;background:#FCEFA2;border:1px solid #6F7480"></div>
<div class="t" style="left:934px;top:432.9px;font-size:12px;color:#1E1E1E;font-family:'Liberation Sans',sans-serif;letter-spacing:-0.046px;">Breakpoint Settings</div>
<svg class="a" style="left:1047px;top:433px;" width="9" height="9" viewBox="0 0 9 9"><path d="M0.5 0.5 L8.5 8.5 M8.5 0.5 L0.5 8.5" stroke="#555" stroke-width="1.3"/></svg>
<div class="a" style="left:87px;top:432px;width:12px;height:15px;background:#F3C2F5;"></div>
<div class="a" style="left:87px;top:447px;width:12px;height:2px;background:#9A7E98;"></div>
<div class="a" style="left:87px;top:449px;width:12px;height:46px;background:#F8C4DB;"></div>
<div class="a" style="left:98px;top:476px;width:16px;height:147px;background:#F8C4DB;"></div>
<div class="a" style="left:127px;top:499px;width:4px;height:17px;background:#F8C4DB;"></div>
<div class="a" style="left:132px;top:516px;width:12px;height:33px;background:#F8C4DB;"></div>
<div class="a" style="left:117px;top:449px;width:65px;height:12px;background:#FCC7A6;"></div>
<div class="a" style="left:123px;top:611px;width:65px;height:12px;background:#FCC7A6;"></div>
<div class="t" style="left:99.3px;top:460.1px;font-size:12px;color:#1E1E1E;font-family:'Liberation Sans',sans-serif;font-weight:bold;letter-spacing:-0.064px;">Conditions:</div>
<div class="t" style="left:113.4px;top:479.2px;font-size:12px;color:#1E1E1E;font-family:'Liberation Sans',sans-serif;letter-spacing:0.064px;">Location:</div>
<div class="t" style="left:166.5px;top:479.2px;font-size:12px;color:#1E70C8;font-family:'Liberation Sans',sans-serif;letter-spacing:0.144px;">MainWindow.xaml.cs, ln 32, col 24</div>
<div class="a" style="left:114px;top:499px;width:13px;height:13px;background:#FFFFFF;border:1px solid #333333"></div>
<svg class="a" style="left:116px;top:501px;" width="9" height="9" viewBox="0 0 9 9"><path d="M1 4.5 L3.5 7.5 L8.3 1.2" stroke="#000" stroke-width="2" fill="none"/></svg>
<div class="t" style="left:131.3px;top:500.4px;font-size:12px;color:#1E1E1E;font-family:'Liberation Sans',sans-serif;letter-spacing:0.347px;">Additional conditions</div>
<svg class="a" style="left:252.7px;top:500.6px;" width="10" height="10" viewBox="0 0 10 10"><circle cx="5" cy="5" r="5" fill="#1BA1E2"/><rect x="4.3" y="4" width="1.5" height="4" fill="#fff"/><rect x="4.3" y="2" width="1.5" height="1.4" fill="#fff"/></svg>
<div class="t" style="left:144.4px;top:520.4px;font-size:12px;color:#1E1E1E;font-family:'Liberation Sans',sans-serif;letter-spacing:0.273px;">Conditional statement</div>
<svg class="a" style="left:266px;top:522px;" width="10" height="7" viewBox="0 0 10 7"><path d="M1 1 L5 5.5 L9 1" stroke="#1E1E1E" stroke-width="1.4" fill="none"/></svg>
<div class="t" style="left:296.5px;top:520.4px;font-size:12px;color:#1E1E1E;font-family:'Liberation Sans',sans-serif;letter-spacing:0.112px;">Is true</div>
<svg class="a" style="left:331px;top:522px;" width="10" height="7" viewBox="0 0 10 7"><path d="M1 1 L5 5.5 L9 1" stroke="#1E1E1E" stroke-width="1.4" fill="none"/></svg>
<div class="t" style="left:360.4px;top:520.8px;font-size:12px;color:#1E70C8;font-family:'Liberation Sans',sans-serif;letter-spacing:0.156px;">File.Name == &quot;ProblemFile.jpg&quot;</div>
<svg class="a" style="left:544px;top:525px;" width="7" height="7" viewBox="0 0 7 7"><path d="M0.5 0.5 L6.5 6.5 M6.5 0.5 L0.5 6.5" stroke="#8A8A8A" stroke-width="1.2"/></svg>
<div class="t" style="left:144.4px;top:539.9px;font-size:12px;color:#1E70C8;font-family:'Liberation Sans',sans-serif;letter-spacing:0.4px;">Add condition</div>
<div class="t" style="left:98.4px;top:558.1px;font-size:12px;color:#1E1E1E;font-family:'Liberation Sans',sans-serif;font-weight:bold;letter-spacing:-0.143px;">Actions:</div>
<div class="a" style="left:114px;top:578px;width:13px;height:13px;background:#FFFFFF;border:1px solid #333333"></div>
<svg class="a" style="left:116px;top:580px;" width="9" height="9" viewBox="0 0 9 9"><path d="M1 4.5 L3.5 7.5 L8.3 1.2" stroke="#000" stroke-width="2" fill="none"/></svg>
<div class="t" style="left:131.3px;top:579.2px;font-size:12px;color:#1E1E1E;font-family:'Liberation Sans',sans-serif;letter-spacing:-0.336px;">Break</div>
<div class="a" style="left:114px;top:598px;width:13px;height:13px;background:#FFFFFF;border:1px solid #333333"></div>
<div class="t" style="left:130.4px;top:599.1px;font-size:12px;color:#1E1E1E;font-family:'Liberation Sans',sans-serif;letter-spacing:0.291px;">Additional actions</div>
<svg class="a" style="left:232.8px;top:600px;" width="10" height="10" viewBox="0 0 10 10"><circle cx="5" cy="5" r="5" fill="#1BA1E2"/><rect x="4.3" y="4" width="1.5" height="4" fill="#fff"/><rect x="4.3" y="2" width="1.5" height="1.4" fill="#fff"/></svg>
<div class="a" style="left:276px;top:518px;width:1px;height:40px;background:#FF0000;"></div>
<div class="a" style="left:296px;top:518px;width:1px;height:40px;background:#FF0000;"></div>
<div class="a" style="left:340px;top:518px;width:1px;height:40px;background:#FF0000;"></div>
<div class="a" style="left:360px;top:518px;width:1px;height:40px;background:#FF0000;"></div>
<div class="a" style="left:532px;top:516px;width:1px;height:40px;background:#FF0000;"></div>
<div class="a" style="left:543px;top:516px;width:1px;height:40px;background:#FF0000;"></div>
<div class="a" style="left:347px;top:471px;width:40px;height:1px;background:#FF0000;"></div>
<div class="a" style="left:347px;top:489px;width:40px;height:1px;background:#FF0000;"></div>
<div class="a" style="left:381px;top:472px;width:1px;height:17px;background:#F0B0A0;"></div>
<div class="t" style="left:80px;top:418.18px;font-size:12.5px;color:#FF0000;letter-spacing:-0.17px">12p<span style="color:#FF5050">x</span></div>
<div class="t" style="left:185.8px;top:449.57px;font-size:12.5px;color:#FF0000;letter-spacing:-0.17px">12p<span style="color:#FF5050">x</span></div>
<div class="t" style="left:388.4px;top:474.77px;font-size:12.5px;color:#FF0000;letter-spacing:-0.17px">20p<span style="color:#FF5050">x</span></div>
<div class="t" style="left:119px;top:487.98px;font-size:12.5px;color:#FF0000;letter-spacing:-0.078px">4p<span style="color:#FF5050">x</span></div>
<div class="t" style="left:125.1px;top:546.88px;font-size:12.5px;color:#FF0000;letter-spacing:-0.17px">12p<span style="color:#FF5050">x</span></div>
<div class="t" style="left:272.2px;top:559.27px;font-size:12.5px;color:#FF0000;letter-spacing:-0.17px">20p<span style="color:#FF5050">x</span></div>
<div class="t" style="left:336.7px;top:559.27px;font-size:12.5px;color:#FF0000;letter-spacing:-0.17px">20p<span style="color:#FF5050">x</span></div>
<div class="t" style="left:524.9px;top:557.08px;font-size:12.5px;color:#FF0000;letter-spacing:-0.17px">12p<span style="color:#FF5050">x</span></div>
<div class="t" style="left:192.3px;top:610.98px;font-size:12.5px;color:#FF0000;letter-spacing:-0.17px">12p<span style="color:#FF5050">x</span></div>
<div class="t" style="left:93.4px;top:627.17px;font-size:12.5px;color:#FF0000;letter-spacing:-0.17px">16p<span style="color:#FF5050">x</span></div>
</body></html>
